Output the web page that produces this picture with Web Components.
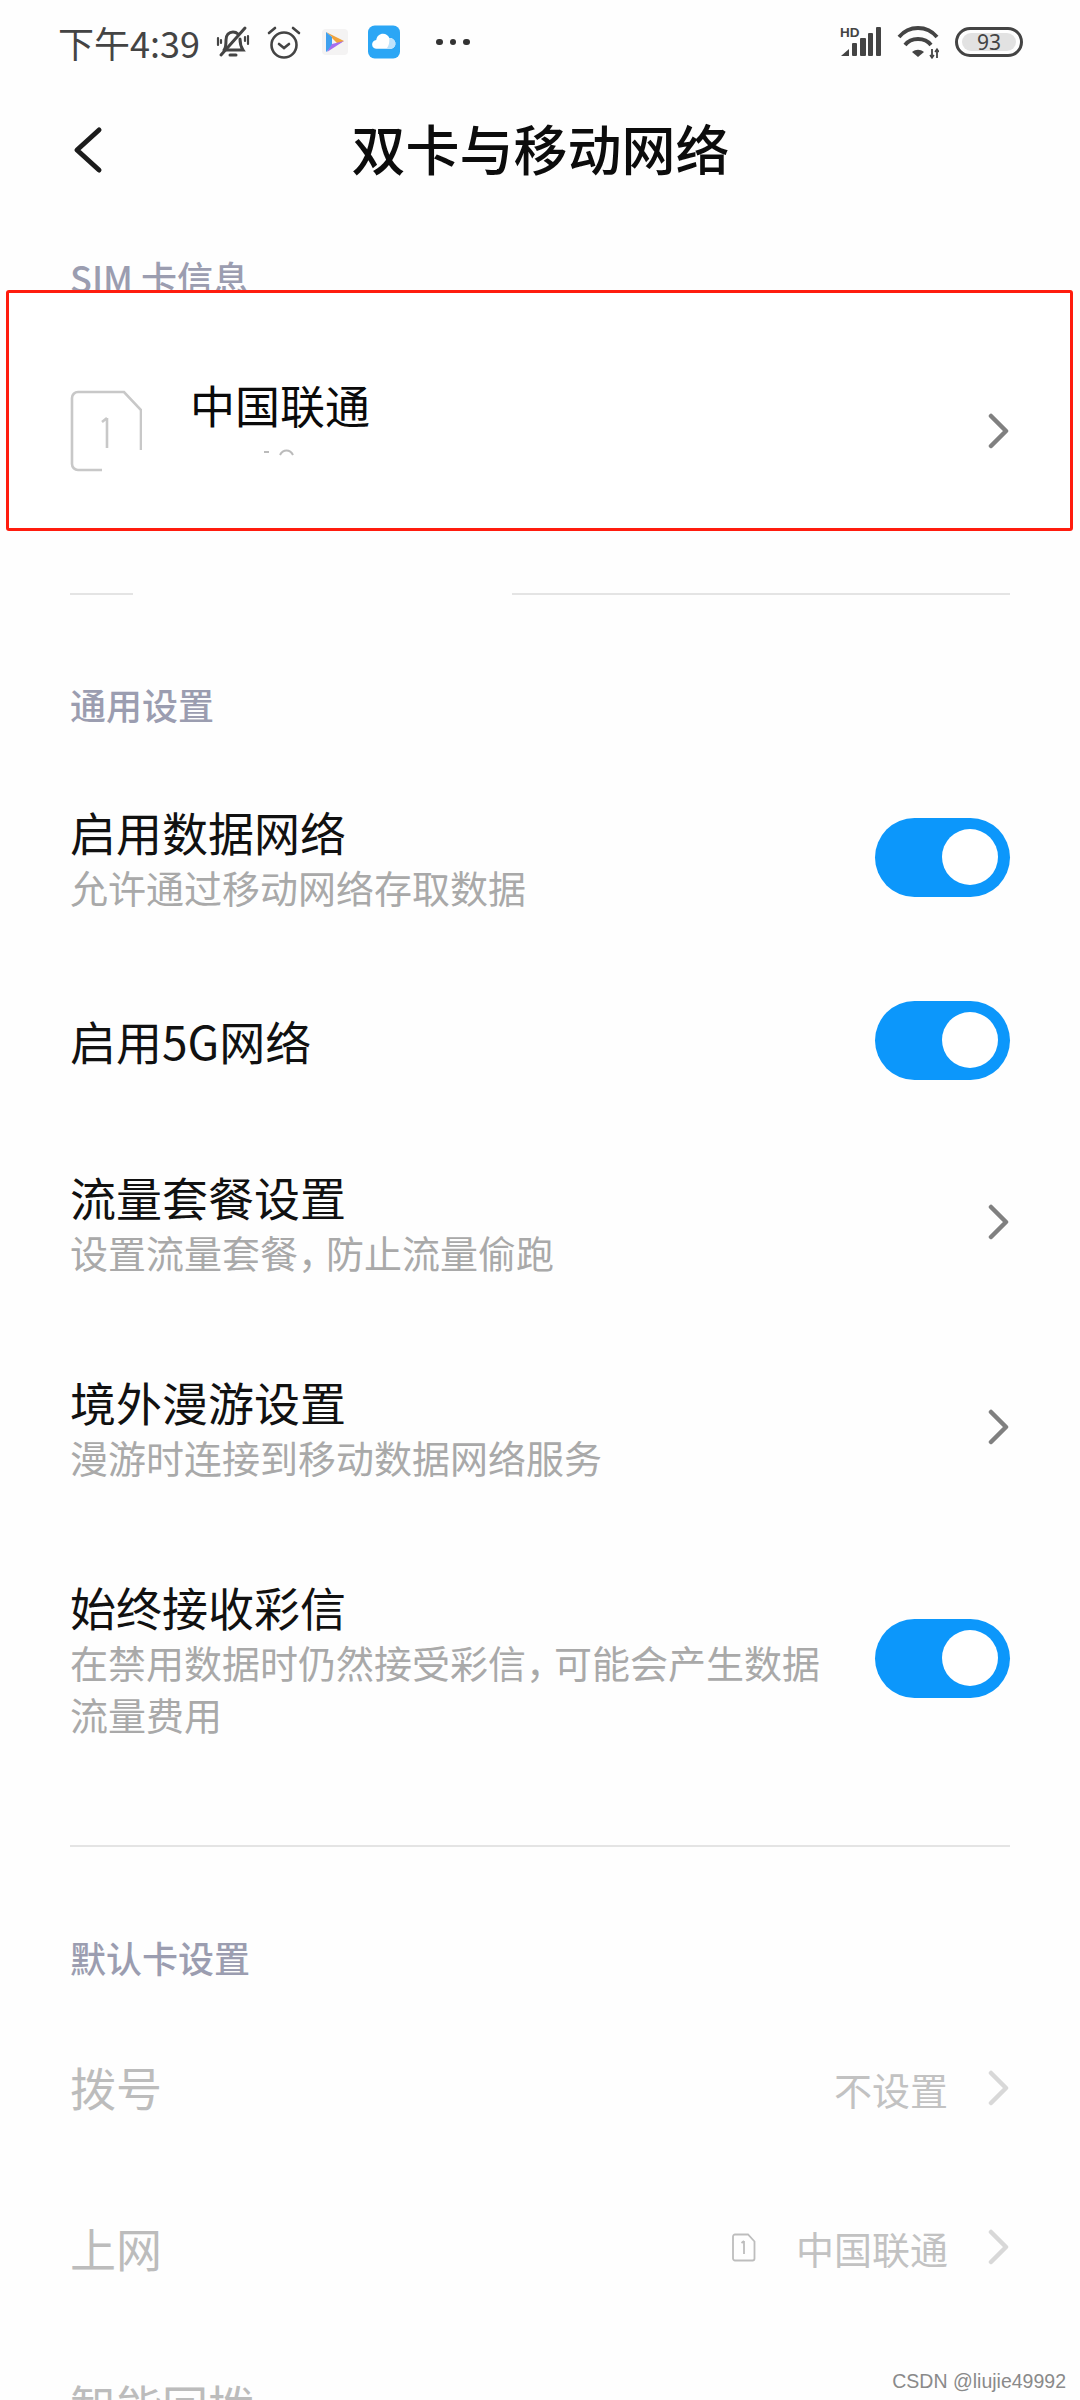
<!DOCTYPE html>
<html lang="zh">
<head>
<meta charset="utf-8">
<title>双卡与移动网络</title>
<style>
  html, body { margin: 0; padding: 0; background: #fefefe; }
  body {
    width: 1080px; height: 2400px; overflow: hidden; position: relative;
    font-family: "Noto Sans CJK SC", "Noto Sans", sans-serif;
  }
</style>
</head>
<body>
<status-bar></status-bar>
<title-bar>双卡与移动网络</title-bar>
<section-head style="--top:41px">SIM 卡信息</section-head>
<sim-box></sim-box>
<line-rule gap style="--top:62px"></line-rule>
<section-head style="--top:89px">通用设置</section-head>
<setting-row style="--top:77px" title="启用数据网络" control="toggle">允许通过移动网络存取数据</setting-row>
<setting-row style="--top:97px" title="启用5G网络" control="toggle"></setting-row>
<setting-row style="--top:96px" title="流量套餐设置" control="chevron">设置流量套餐<span style="letter-spacing:-10px">，</span>防止流量偷跑</setting-row>
<setting-row style="--top:93px" title="境外漫游设置" control="chevron">漫游时连接到移动数据网络服务</setting-row>
<setting-row style="--top:93px" title="始终接收彩信" control="toggle">在禁用数据时仍然接受彩信<span style="letter-spacing:-10px">，</span>可能会产生数据<br>流量费用</setting-row>
<line-rule style="--top:105px"></line-rule>
<section-head style="--top:90px">默认卡设置</section-head>
<setting-row style="--top:79px" title="拨号" control="chevron" disabled value="不设置" shift="2"></setting-row>
<setting-row style="--top:101px" title="上网" control="chevron" disabled value="中国联通" sim></setting-row>
<setting-row style="--top:97px" title="智能回拨" disabled></setting-row>
<water-mark>CSDN @liujie49992</water-mark>

<script>
const FONT = '"Noto Sans CJK SC", "Noto Sans", sans-serif';

class StatusBar extends HTMLElement {
  connectedCallback() {
    this.attachShadow({ mode: 'open' }).innerHTML = `
    <style>
      :host { display: flex; align-items: center; height: 84px; padding: 0 57px 0 58px; box-sizing: border-box; color: #444; font-family: ${FONT}; }
      .time { font-size: 36px; width: 158px; }
      .left { display: flex; align-items: center; }
      .right { margin-left: auto; display: flex; align-items: center; gap: 16px; }
      svg { display: block; }
      .batt { width: 68px; height: 30px; box-sizing: border-box; border: 3px solid #444; border-radius: 15px; padding: 3px 4px; display: flex; }
      .batt span { flex: 1; background: #e2e2e2; border-radius: 9px; font: 21px/18px "Noto Sans", sans-serif; text-align: center; color: #444; }
      .dots { display: flex; gap: 7px; margin-left: 36px; }
      .dots i { width: 6.500px; height: 6.500px; border-radius: 50%; background: #333; }
    </style>
    <div class="left">
      <span class="time">下午4:39</span>
      <svg width="34" height="34" viewBox="0 0 34 34" fill="none" stroke="#444" stroke-width="3" stroke-linecap="round">
        <path d="M8 25c2-2 2-6 2-10 0-5 3-8 7-8 2 0 4 1 5 2M24 14c0 5 1 8 3 11H8"/>
        <path d="M14 30h6" stroke-width="3"/><path d="M5 30 29 3"/>
        <path d="M2 13v7M32 11v8M5 15v3M29 12v4" stroke-width="2.200"/>
      </svg>
      <svg style="margin-left:17px" width="34" height="34" viewBox="0 0 34 34" fill="none" stroke="#444" stroke-width="2.600" stroke-linecap="round">
        <circle cx="17" cy="20" r="12.500"/><path d="M12 19l5 4 5-4"/><path d="M2 8l6-5M32 8l-6-5"/>
      </svg>
      <svg style="margin-left:21px" width="26" height="26" viewBox="0 0 26 26">
        <rect width="26" height="26" fill="#f4f3f3" rx="4"/>
        <path d="M4 3l18 9-6 3-6-6v-1z" fill="#f0a33c"/><path d="M4 3l6 5v10l-6 5z" fill="#3fa0ee"/><path d="M22 12L5 23l5-8z" fill="#a66cf0"/>
      </svg>
      <svg style="margin-left:20px" width="32" height="34" viewBox="0 0 33 34">
        <rect width="33" height="34" rx="7" fill="#2ba6f5"/>
        <path d="M9 24a4.500 4.500 0 0 1-.5-9C9 11 12 8.500 15.500 8.500c3 0 5.500 1.700 6.500 4.500a5.600 5.600 0 0 1 2 11z" fill="#fff"/>
        <path d="M19 24c3-3 3-7 3-11a5.600 5.600 0 0 1 2 11z" fill="#bfe3fb"/>
      </svg>
      <span class="dots"><i></i><i></i><i></i></span>
    </div>
    <div class="right">
      <svg style="margin-top:-6px" width="41" height="37" viewBox="0 -6 41 37">
        <text x="0" y="10" font-family="Liberation Sans" font-weight="700" font-size="13.500" fill="#444">HD</text>
        <path d="M1 29l8-7v7z" fill="#444"/>
        <rect x="12" y="16" width="5" height="13" rx="1" fill="#444"/><rect x="20" y="11" width="6" height="18" rx="1" fill="#444"/><rect x="28" y="6" width="5" height="23" rx="1" fill="#444"/><rect x="36" y="0" width="5" height="29" rx="1" fill="#444"/>
      </svg>
      <svg width="42" height="33" viewBox="0 0 42 33" fill="none" stroke="#444" stroke-width="3.800">
        <path d="M2 11C12-1 30-1 40 11M8 19c6-8 20-8 26 0"/>
        <path d="M21 31l-6-5c4-3 8-3 12 0z" fill="#444" stroke="none"/>
        <path d="M35 23v9M40 23v9" stroke-width="1.800"/><path d="M33 29l2 3 2-3M38 26l2-3 2 3" stroke-width="1.400"/>
      </svg>
      <div class="batt"><span>93</span></div>
    </div>`;
  }
}

class TitleBar extends HTMLElement {
  connectedCallback() {
    this.attachShadow({ mode: 'open' }).innerHTML = `
    <style>
      :host { display: block; position: relative; height: 132px; font-family: ${FONT}; }
      .t { height: 126px; display: flex; align-items: center; justify-content: center; font-size: 54px; font-weight: 500; color: #0c0c0c; margin-left: 1px; }
      svg { position: absolute; left: 70px; top: 41px; }
    </style>
    <svg width="34" height="50" viewBox="0 0 34 50" fill="none" stroke="#1c1c1c" stroke-width="5" stroke-linecap="round" stroke-linejoin="round"><path d="M29 5 7 25l22 20"/></svg>
    <div class="t"><slot></slot></div>`;
  }
}

class SectionHead extends HTMLElement {
  connectedCallback() {
    this.attachShadow({ mode: 'open' }).innerHTML = `
    <style>
      :host { display: block; padding: var(--top, 0) 70px 0; font: 500 36px/40px ${FONT}; color: #9b9db0; }
    </style><slot></slot>`;
  }
}

class SimBox extends HTMLElement {
  connectedCallback() {
    this.attachShadow({ mode: 'open' }).innerHTML = `
    <style>
      :host { display: flex; align-items: center; position: relative; box-sizing: border-box; width: 1067px; height: 241px; margin: -7px 0 0 6px;
        background: #fff; border: 3px solid #ff1c0e; border-radius: 3px; padding: 40px 60px 0 61px; font-family: ${FONT}; }
      .name { font-size: 45px; line-height: 56px; color: #0a0a0a; margin-left: 48px; margin-top: -52px; }
      chevron-mark { margin-left: auto; }
      .text { display: flex; flex-direction: column; }
      svg.sim { display: block; }
    </style>
    <svg class="sim" width="72" height="82" viewBox="0 0 72 82" fill="none" stroke="#c8c8c8" stroke-width="2.600">
      <path d="M32 80H8a6 6 0 0 1-6-6V8a6 6 0 0 1 6-6h46l17 18v40"/>
      <path d="M37 28v30M32 32l5-4"/>
    </svg>
    <div class="text"><div class="name">中国联通</div></div>
    <svg style="position:absolute;left:253px;top:155px" width="34" height="10" viewBox="0 0 34 10" fill="none" stroke="#bbb" stroke-width="2"><path d="M2 4h5M18 7c3-6 10-6 13 0"/></svg>
    <chevron-mark></chevron-mark>`;
  }
}

class LineRule extends HTMLElement {
  connectedCallback() {
    const gap = this.hasAttribute('gap');
    this.attachShadow({ mode: 'open' }).innerHTML = `
    <style>
      :host { display: block; padding: var(--top, 0) 70px 0; }
      .l { height: 2px; background: ${gap ? 'linear-gradient(90deg,#e4e4e4 0 63px,transparent 63px 442px,#e4e4e4 442px)' : '#e4e4e4'}; }
    </style><div class="l"></div>`;
  }
}

class ChevronMark extends HTMLElement {
  connectedCallback() {
    const c = this.hasAttribute('light') ? '#d8d8d8' : '#808080';
    this.attachShadow({ mode: 'open' }).innerHTML = `
    <style>:host { display: block; width: 22px; height: 36px; } svg { display: block; }</style>
    <svg width="22" height="36" viewBox="0 0 22 36" fill="none" stroke="${c}" stroke-width="4.500" stroke-linecap="round" stroke-linejoin="round"><path d="M3 3l15 15L3 33"/></svg>`;
  }
}

class ToggleSwitch extends HTMLElement {
  connectedCallback() {
    this.attachShadow({ mode: 'open' }).innerHTML = `
    <style>
      :host { display: flex; align-items: center; justify-content: flex-end; box-sizing: border-box; width: 135px; height: 79px; padding-right: 12px; border-radius: 40px; background: #0c97fb; }
      i { display: block; width: 56px; height: 56px; border-radius: 50%; background: #fff; }
    </style><i></i>`;
  }
}

class SettingRow extends HTMLElement {
  connectedCallback() {
    const dis = this.hasAttribute('disabled');
    const control = this.getAttribute('control');
    const shift = this.getAttribute('shift') || 0;
    const value = this.getAttribute('value');
    let right = '';
    if (value) {
      right += `<div class="val">${this.hasAttribute('sim') ? `<svg width="24" height="29" viewBox="0 0 24 29" fill="none" stroke="#bdbdbd" stroke-width="1.800"><path d="M3 1.500h13l6.500 7v17a2 2 0 0 1-2 2H3a2 2 0 0 1-2-2v-22a2 2 0 0 1 2-2z"/><path d="M12 8v13M9.500 10l2.500-2"/></svg>` : ''}<span>${value}</span></div>`;
    }
    if (control === 'toggle') right += `<toggle-switch></toggle-switch>`;
    if (control === 'chevron') right += `<chevron-mark ${dis ? 'light' : ''}></chevron-mark>`;
    this.attachShadow({ mode: 'open' }).innerHTML = `
    <style>
      :host { display: flex; align-items: center; padding: var(--top, 0) 70px 0; font-family: ${FONT}; }
      .text { flex: 1; }
      .title { font-size: 46px; line-height: 60px; color: ${dis ? '#bcbcbc' : '#111'}; }
      .sub { font-size: 38px; line-height: 52px; color: #a9a9a9; }
      .right { display: flex; align-items: center; height: 0; margin-top: ${shift * 2}px; }
      .val { display: flex; align-items: center; gap: 40px; font-size: 38px; color: #c2c2c2; margin-right: 40px; }
      svg { display: block; }
    </style>
    <div class="text">
      <div class="title">${this.getAttribute('title')}</div>
      ${this.childNodes.length ? '<div class="sub"><slot></slot></div>' : ''}
    </div>
    <div class="right">${right}</div>`;
  }
}

class WaterMark extends HTMLElement {
  connectedCallback() {
    this.attachShadow({ mode: 'open' }).innerHTML = `
    <style>
      :host { position: absolute; right: 14px; top: 2369px; font: 19.500px/24px "Liberation Sans", sans-serif; color: #8a8a8a; }
    </style><slot></slot>`;
  }
}

customElements.define('chevron-mark', ChevronMark);
customElements.define('toggle-switch', ToggleSwitch);
customElements.define('status-bar', StatusBar);
customElements.define('title-bar', TitleBar);
customElements.define('section-head', SectionHead);
customElements.define('sim-box', SimBox);
customElements.define('line-rule', LineRule);
customElements.define('setting-row', SettingRow);
customElements.define('water-mark', WaterMark);
</script>
</body>
</html>
